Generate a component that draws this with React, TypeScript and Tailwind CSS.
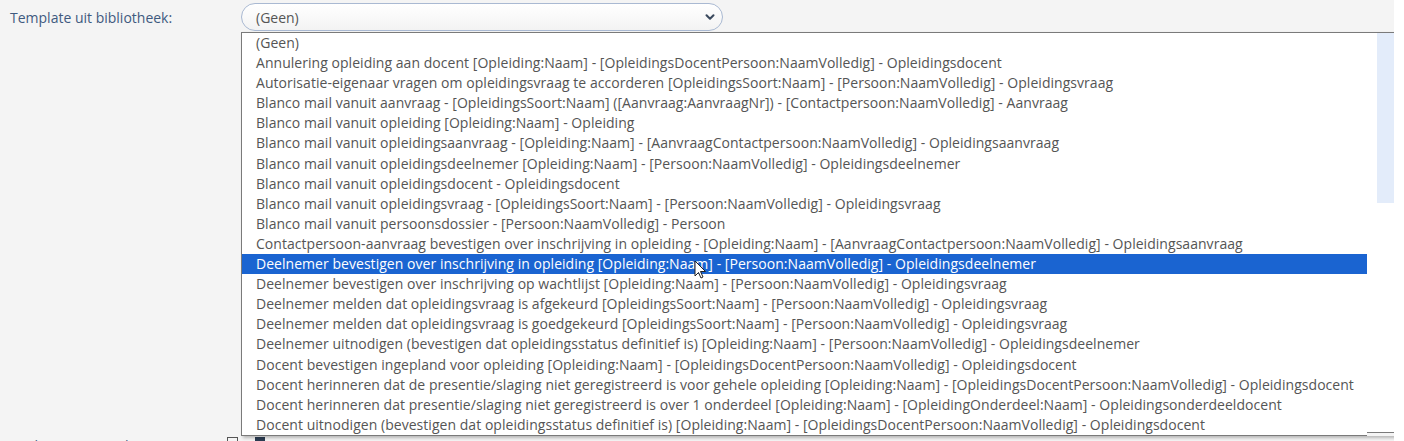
import { ChevronDown } from "lucide-react";

const templates = [
  "(Geen)",
  "Annulering opleiding aan docent [Opleiding:Naam] - [OpleidingsDocentPersoon:NaamVolledig] - Opleidingsdocent",
  "Autorisatie-eigenaar vragen om opleidingsvraag te accorderen [OpleidingsSoort:Naam] - [Persoon:NaamVolledig] - Opleidingsvraag",
  "Blanco mail vanuit aanvraag - [OpleidingsSoort:Naam] ([Aanvraag:AanvraagNr]) - [Contactpersoon:NaamVolledig] - Aanvraag",
  "Blanco mail vanuit opleiding [Opleiding:Naam] - Opleiding",
  "Blanco mail vanuit opleidingsaanvraag - [Opleiding:Naam] - [AanvraagContactpersoon:NaamVolledig] - Opleidingsaanvraag",
  "Blanco mail vanuit opleidingsdeelnemer [Opleiding:Naam] - [Persoon:NaamVolledig] - Opleidingsdeelnemer",
  "Blanco mail vanuit opleidingsdocent - Opleidingsdocent",
  "Blanco mail vanuit opleidingsvraag - [OpleidingsSoort:Naam] - [Persoon:NaamVolledig] - Opleidingsvraag",
  "Blanco mail vanuit persoonsdossier - [Persoon:NaamVolledig] - Persoon",
  "Contactpersoon-aanvraag bevestigen over inschrijving in opleiding - [Opleiding:Naam] - [AanvraagContactpersoon:NaamVolledig] - Opleidingsaanvraag",
  "Deelnemer bevestigen over inschrijving in opleiding [Opleiding:Naam] - [Persoon:NaamVolledig] - Opleidingsdeelnemer",
  "Deelnemer bevestigen over inschrijving op wachtlijst [Opleiding:Naam] - [Persoon:NaamVolledig] - Opleidingsvraag",
  "Deelnemer melden dat opleidingsvraag is afgekeurd [OpleidingsSoort:Naam] - [Persoon:NaamVolledig] - Opleidingsvraag",
  "Deelnemer melden dat opleidingsvraag is goedgekeurd [OpleidingsSoort:Naam] - [Persoon:NaamVolledig] - Opleidingsvraag",
  "Deelnemer uitnodigen (bevestigen dat opleidingsstatus definitief is) [Opleiding:Naam] - [Persoon:NaamVolledig] - Opleidingsdeelnemer",
  "Docent bevestigen ingepland voor opleiding [Opleiding:Naam] - [OpleidingsDocentPersoon:NaamVolledig] - Opleidingsdocent",
  "Docent herinneren dat de presentie/slaging niet geregistreerd is voor gehele opleiding [Opleiding:Naam] - [OpleidingsDocentPersoon:NaamVolledig] - Opleidingsdocent",
  "Docent herinneren dat presentie/slaging niet geregistreerd is over 1 onderdeel [Opleiding:Naam] - [OpleidingOnderdeel:Naam] - Opleidingsonderdeeldocent",
  "Docent uitnodigen (bevestigen dat opleidingsstatus definitief is) [Opleiding:Naam] - [OpleidingsDocentPersoon:NaamVolledig] - Opleidingsdocent",
];

const SELECTED = 11;

function Cursor() {
  return (
    <svg width="14" height="20" viewBox="0 0 14 20" className="absolute left-[694px] top-[260px]">
      <path d="M1 1 L1 16 L4.5 12.5 L7 18 L9 17 L6.5 11.5 L11.5 11.5 Z" fill="#fff" stroke="#222" strokeWidth="1" strokeLinejoin="round" />
    </svg>
  );
}

export default function App() {
  return (
    <div className="w-[1404px] h-[441px] bg-white overflow-hidden font-['Open_Sans',sans-serif]">
      <div className="relative w-[1394px] h-[441px] bg-[#f4f4f4] overflow-hidden">
        {/* form rows */}
        <div className="flex flex-col gap-[12px] pt-[3px]">
          <div className="flex items-start">
            <label className="w-[241px] pl-[10px] pt-[4px] text-[14px] text-[#3f5a7f]">
              Template uit bibliotheek:
            </label>
            <div className="flex items-center justify-between w-[482px] h-[28px] rounded-[14px] border border-[#a9b9d2] bg-gradient-to-b from-white to-[#f3f3f3] pl-[14px] pr-[5px] text-[14px] text-[#555]">
              <span>(Geen)</span>
              <ChevronDown size={14} strokeWidth={3.5} className="text-[#3b4a5e]" />
            </div>
          </div>
          <div className="h-[360px]" />
          <div className="flex items-start mt-[20px]">
            <label className="w-[227px] pl-[10px] text-[14px] text-[#3f5a7f]">Onderwerp e-mail:</label>
            <div className="flex gap-[17px] pt-[2px]">
              <span className="w-[11px] h-[11px] border border-[#555]" />
              <span className="w-[10px] h-[10px] bg-[#2b3c52]" />
            </div>
          </div>
        </div>

        {/* open option list */}
        <div className="absolute left-[241px] top-[32px] flex shadow-[2px_2px_3px_rgba(0,0,0,0.25)]">
          <ul className="w-[1126px] h-[404px] bg-white border border-[#7a7a7a] border-r-0">
            {templates.map((t, i) => (
              <li
                key={t}
                className={
                  i === SELECTED
                    ? "h-[20.1px] leading-[20px] pl-[14px] text-[14px] tracking-[0.04px] whitespace-nowrap bg-[#1a64d1] text-white"
                    : "h-[20.1px] leading-[20px] pl-[14px] text-[14px] tracking-[0.04px] whitespace-nowrap text-[#555]"
                }
              >
                {t}
              </li>
            ))}
          </ul>
          <div className="w-[31px] h-[401px] bg-white border border-[#7a7a7a] border-l-0">
            <div className="ml-[10px] w-[20px] h-[170px] bg-[#e3ecfa]" />
          </div>
        </div>

        <Cursor />
      </div>
    </div>
  );
}
